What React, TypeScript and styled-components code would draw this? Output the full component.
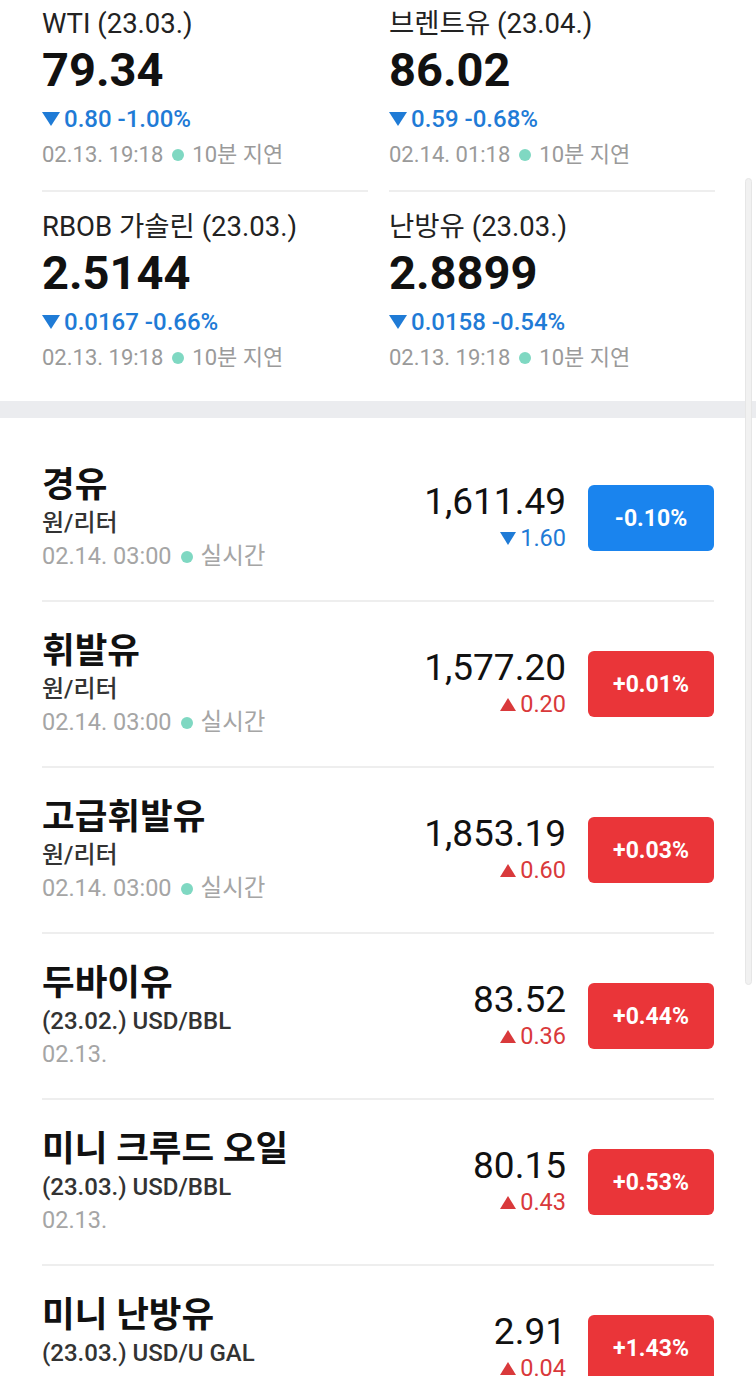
import React from 'react'
import styled, { createGlobalStyle, css } from 'styled-components'

const GlobalStyle = createGlobalStyle`
  html, body {
    margin: 0;
    padding: 0;
    background: #fff;
    overflow: hidden;
  }
  body {
    font-family: Roboto, "Noto Sans CJK KR", "Noto Sans", sans-serif;
    color: #111;
    -webkit-font-smoothing: antialiased;
  }
`

const BLUE = '#1f7bd6'
const RED = '#d9393b'

type Dir = 'up' | 'down'

const Page = styled.div`
  position: relative;
  width: 756px;
  height: 1376px;
  overflow: hidden;
  background: #fff;
`

const FuturesGrid = styled.div`
  display: grid;
  grid-template-columns: 326px 326px;
  column-gap: 21px;
  padding: 0 42px 27px;
`

const Cell = styled.div<{ $first?: boolean }>`
  display: flex;
  flex-direction: column;
  padding: ${(p) => (p.$first ? '8px 0 19px' : '19px 0 0')};
  ${(p) =>
    p.$first &&
    css`
      border-bottom: 2px solid #eeeeee;
    `}
`

const CellTitle = styled.div`
  font-size: 27.5px;
  line-height: 32px;
  color: #222;
  white-space: nowrap;
`

const BigNumber = styled.div`
  font-size: 47px;
  line-height: 56px;
  font-weight: 700;
  color: #111;
  margin-top: 2px;
`

const ChangeLine = styled.div<{ $dir: Dir }>`
  display: flex;
  align-items: center;
  font-size: 24px;
  line-height: 32px;
  font-weight: 500;
  color: ${(p) => (p.$dir === 'down' ? BLUE : RED)};
  margin-top: 5px;
  white-space: nowrap;
`

const Tri = styled.span<{ $dir: Dir }>`
  display: inline-block;
  width: 0;
  height: 0;
  margin-right: 4px;
  border-left: 9px solid transparent;
  border-right: 9px solid transparent;
  ${(p) =>
    p.$dir === 'down'
      ? css`
          border-top: 14px solid ${BLUE};
        `
      : css`
          border-bottom: 14px solid ${RED};
        `}
`

const TimeLine = styled.div`
  display: flex;
  align-items: center;
  font-size: 22px;
  line-height: 32px;
  color: #9a9a9a;
  margin-top: 4px;
  white-space: nowrap;
`

const Dot = styled.span`
  display: inline-block;
  width: 12px;
  height: 12px;
  border-radius: 50%;
  background: #7fd8c2;
  margin: 0 8px 0 9px;
`

const Band = styled.div`
  height: 17px;
  background: #ebecef;
`

const List = styled.div`
  padding: 18px 42px 0;
`

const Row = styled.div`
  display: flex;
  align-items: center;
  padding: 27px 0 27px;
  border-bottom: 2px solid #eeeeee;
`

const RowInfo = styled.div`
  flex: 1;
  display: flex;
  flex-direction: column;
  min-width: 0;
`

const RowTitle = styled.div`
  font-size: 35.5px;
  line-height: 44px;
  font-weight: 700;
  color: #111;
  white-space: nowrap;
`

const RowUnit = styled.div`
  font-size: 24px;
  line-height: 33px;
  font-weight: 500;
  color: #333;
  white-space: nowrap;
`

const RowTime = styled.div`
  display: flex;
  align-items: center;
  font-size: 23.5px;
  line-height: 33px;
  color: #a5a5a5;
  white-space: nowrap;
`

const PriceBlock = styled.div`
  display: flex;
  flex-direction: column;
  align-items: flex-end;
  margin-right: 22px;
  margin-bottom: 2px;
`

const Price = styled.div`
  font-size: 37px;
  line-height: 42px;
  color: #111;
`

const PriceChange = styled.div<{ $dir: Dir }>`
  display: flex;
  align-items: center;
  font-size: 23.5px;
  line-height: 30px;
  color: ${(p) => (p.$dir === 'down' ? BLUE : RED)};
`

const SmallTri = styled(Tri)`
  border-left-width: 8px;
  border-right-width: 8px;
  ${(p) =>
    p.$dir === 'down'
      ? css`
          border-top-width: 13px;
        `
      : css`
          border-bottom-width: 13px;
        `}
`

const Badge = styled.div<{ $dir: Dir }>`
  width: 126px;
  height: 66px;
  border-radius: 6px;
  display: flex;
  align-items: center;
  justify-content: center;
  color: #fff;
  font-size: 23px;
  font-weight: 700;
  background: ${(p) => (p.$dir === 'down' ? '#1a84ee' : '#ea3539')};
`

const ScrollThumb = styled.div`
  position: absolute;
  top: 178px;
  right: 4px;
  width: 7px;
  height: 807px;
  border-radius: 4px;
  background: #f1f1f1;
  border: 1px solid #e6e6e6;
  box-sizing: border-box;
`

const futures = [
  { name: 'WTI (23.03.)', value: '79.34', chg: '0.80', pct: '-1.00%', time: '02.13. 19:18' },
  { name: '브렌트유 (23.04.)', value: '86.02', chg: '0.59', pct: '-0.68%', time: '02.14. 01:18' },
  { name: 'RBOB 가솔린 (23.03.)', value: '2.5144', chg: '0.0167', pct: '-0.66%', time: '02.13. 19:18' },
  { name: '난방유 (23.03.)', value: '2.8899', chg: '0.0158', pct: '-0.54%', time: '02.13. 19:18' },
]

const rows: {
  name: string
  unit: string
  time: string
  live?: boolean
  price: string
  chg: string
  pct: string
  dir: Dir
}[] = [
  { name: '경유', unit: '원/리터', time: '02.14. 03:00', live: true, price: '1,611.49', chg: '1.60', pct: '-0.10%', dir: 'down' },
  { name: '휘발유', unit: '원/리터', time: '02.14. 03:00', live: true, price: '1,577.20', chg: '0.20', pct: '+0.01%', dir: 'up' },
  { name: '고급휘발유', unit: '원/리터', time: '02.14. 03:00', live: true, price: '1,853.19', chg: '0.60', pct: '+0.03%', dir: 'up' },
  { name: '두바이유', unit: '(23.02.) USD/BBL', time: '02.13.', price: '83.52', chg: '0.36', pct: '+0.44%', dir: 'up' },
  { name: '미니 크루드 오일', unit: '(23.03.) USD/BBL', time: '02.13.', price: '80.15', chg: '0.43', pct: '+0.53%', dir: 'up' },
  { name: '미니 난방유', unit: '(23.03.) USD/U GAL', time: '02.13.', price: '2.91', chg: '0.04', pct: '+1.43%', dir: 'up' },
]

export default function App() {
  return (
    <>
      <GlobalStyle />
      <Page>
        <FuturesGrid>
          {futures.map((f, i) => (
            <Cell key={f.name} $first={i < 2}>
              <CellTitle>{f.name}</CellTitle>
              <BigNumber>{f.value}</BigNumber>
              <ChangeLine $dir="down">
                <Tri $dir="down" />
                {f.chg}&nbsp;{f.pct}
              </ChangeLine>
              <TimeLine>
                {f.time}
                <Dot />
                10분 지연
              </TimeLine>
            </Cell>
          ))}
        </FuturesGrid>
        <Band />
        <List>
          {rows.map((r) => (
            <Row key={r.name}>
              <RowInfo>
                <RowTitle>{r.name}</RowTitle>
                <RowUnit>{r.unit}</RowUnit>
                <RowTime>
                  {r.time}
                  {r.live && (
                    <>
                      <Dot />
                      실시간
                    </>
                  )}
                </RowTime>
              </RowInfo>
              <PriceBlock>
                <Price>{r.price}</Price>
                <PriceChange $dir={r.dir}>
                  <SmallTri $dir={r.dir} />
                  {r.chg}
                </PriceChange>
              </PriceBlock>
              <Badge $dir={r.dir}>{r.pct}</Badge>
            </Row>
          ))}
        </List>
        <ScrollThumb />
      </Page>
    </>
  )
}
